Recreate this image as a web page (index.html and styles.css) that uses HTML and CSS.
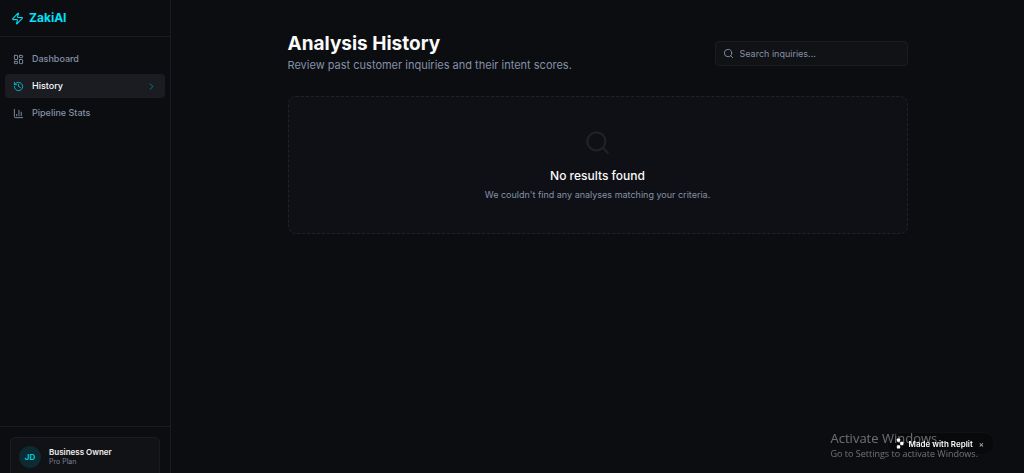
FILE: index.html
```html
<!DOCTYPE html>
<html lang="en">
<head>
    <meta charset="UTF-8">
    <meta name="viewport" content="width=device-width, initial-scale=1.0">
    <title>ZakiAI - Analysis History</title>
    <link rel="stylesheet" href="styles.css">
</head>
<body>
    <div class="app">
        <aside class="sidebar">
            <a class="brand" href="#">
                <svg class="icon brand-icon" viewBox="0 0 24 24"><path d="M4 14a1 1 0 0 1-.78-1.63l9.9-10.2a.5.5 0 0 1 .86.46l-1.92 6.02A1 1 0 0 0 13 10h7a1 1 0 0 1 .78 1.63l-9.9 10.2a.5.5 0 0 1-.86-.46l1.92-6.02A1 1 0 0 0 11 14z"/></svg>
                <span>ZakiAI</span>
            </a>
            <nav class="nav">
                <a class="nav-item" href="#">
                    <svg class="icon" viewBox="0 0 24 24"><rect x="3" y="3" width="7" height="9" rx="1"/><rect x="14" y="3" width="7" height="5" rx="1"/><rect x="14" y="12" width="7" height="9" rx="1"/><rect x="3" y="16" width="7" height="5" rx="1"/></svg>
                    <span>Dashboard</span>
                </a>
                <a class="nav-item nav-item--active" href="#" aria-current="page">
                    <svg class="icon" viewBox="0 0 24 24"><path d="M3 12a9 9 0 1 0 9-9 9.75 9.75 0 0 0-6.74 2.74L3 8"/><path d="M3 3v5h5"/><path d="M12 7v5l4 2"/></svg>
                    <span>History</span>
                    <svg class="icon nav-arrow" viewBox="0 0 24 24"><path d="m9 18 6-6-6-6"/></svg>
                </a>
                <a class="nav-item" href="#">
                    <svg class="icon" viewBox="0 0 24 24"><path d="M3 3v16a2 2 0 0 0 2 2h16"/><path d="M8 17v-3"/><path d="M13 17V5"/><path d="M18 17V9"/></svg>
                    <span>Pipeline Stats</span>
                </a>
            </nav>
            <div class="sidebar-footer">
                <div class="user">
                    <div class="avatar">JD</div>
                    <div>
                        <div class="user-name">Business Owner</div>
                        <div class="user-plan">Pro Plan</div>
                    </div>
                </div>
            </div>
        </aside>

        <main class="main">
            <div class="content">
                <header class="page-header">
                    <div>
                        <h1 class="title">Analysis History</h1>
                        <p class="subtitle">Review past customer inquiries and their intent scores.</p>
                    </div>
                    <label class="search">
                        <svg class="icon" viewBox="0 0 24 24"><circle cx="11" cy="11" r="8"/><path d="m21 21-4.3-4.3"/></svg>
                        <input class="search-input" type="text" placeholder="Search inquiries..." aria-label="Search inquiries">
                    </label>
                </header>
                <section class="empty">
                    <svg class="icon empty-icon" viewBox="0 0 24 24"><circle cx="11" cy="11" r="8"/><path d="m21 21-4.3-4.3"/></svg>
                    <h2 class="empty-title">No results found</h2>
                    <p class="empty-text">We couldn't find any analyses matching your criteria.</p>
                </section>
            </div>
        </main>
    </div>

    <div class="badge">
        <a class="badge-link" href="#">
            <svg class="badge-logo" viewBox="0 0 12 12"><rect x="1" y="0" width="4" height="4" rx="1"/><rect x="5" y="4" width="4" height="4" rx="1"/><rect x="1" y="8" width="4" height="4" rx="1"/></svg>
            <span>Made with Replit</span>
        </a>
        <button class="badge-close" type="button" aria-label="Close">×</button>
    </div>

    <div class="watermark">
        <div class="watermark-title">Activate Windows</div>
        <div class="watermark-text">Go to Settings to activate Windows.</div>
    </div>
</body>
</html>
```
FILE: styles.css
```css
* {
    box-sizing: border-box;
}

body {
    margin: 0;
    height: 100vh;
    overflow: hidden;
    background-color: #0c0d11;
    color: #fafafa;
    font-family: Inter, "Liberation Sans", sans-serif;
    font-size: 9px;
    line-height: 14px;
}

h1, h2, p {
    margin: 0;
}

a {
    color: inherit;
    text-decoration: none;
}

.icon {
    flex: none;
    width: 11px;
    height: 11px;
    fill: none;
    stroke: currentColor;
    stroke-width: 2;
    stroke-linecap: round;
    stroke-linejoin: round;
}

/* the sidebar card runs a little past the fold */
.app {
    display: flex;
    height: calc(100vh + 14px);
}

.sidebar {
    display: flex;
    flex-direction: column;
    flex: none;
    width: 171px;
    border-right: 1px solid #1a1c21;
}

.brand {
    display: flex;
    align-items: center;
    gap: 5px;
    height: 37px;
    padding: 0 11px;
    border-bottom: 1px solid #1a1c21;
    color: #00e1fa;
    font-size: 12px;
    font-weight: 700;
}

.brand-icon {
    width: 13px;
    height: 13px;
}

.nav {
    display: flex;
    flex: 1;
    flex-direction: column;
    gap: 3px;
    padding: 10px 5px;
}

.nav-item {
    display: flex;
    align-items: center;
    gap: 8px;
    height: 24px;
    padding: 0 8px;
    border-radius: 4px;
    color: #8391a5;
    font-weight: 500;
}

.nav-item--active {
    background: #1a1c22;
    color: #fafafa;
}

.nav-item--active .icon {
    color: #00bdd2;
}

.nav-item .nav-arrow {
    margin-left: auto;
    color: #06808e;
}

.sidebar-footer {
    padding: 10px;
    border-top: 1px solid #1a1c21;
}

.user {
    display: flex;
    align-items: center;
    gap: 8px;
    padding: 8px;
    border: 1px solid #1a1c21;
    border-radius: 5px;
    background: #111216;
}

.avatar {
    width: 22px;
    height: 22px;
    border-radius: 50%;
    background: #0d2a31;
    color: #00c8dd;
    font-size: 8px;
    font-weight: 700;
    line-height: 22px;
    text-align: center;
}

.user-name {
    color: #f0f0f0;
    font-size: 8px;
    font-weight: 600;
    line-height: 10px;
}

.user-plan {
    color: #768295;
    font-size: 7px;
    line-height: 10px;
}

.main {
    flex: 1;
    padding: 32px 21px;
}

.content {
    max-width: 620px;
    margin: 0 auto;
}

.page-header {
    display: flex;
    align-items: center;
    justify-content: space-between;
    margin-bottom: 21px;
}

.title {
    font-size: 19px;
    font-weight: 700;
    line-height: 24px;
}

.subtitle {
    color: #8391a5;
    font-size: 11px;
    line-height: 19px;
}

.search {
    display: flex;
    align-items: center;
    gap: 6px;
    width: 193px;
    height: 25px;
    padding: 0 7px;
    border: 1px solid #1a1c21;
    border-radius: 4px;
    background: #111216;
    color: #8391a5;
}

.search-input {
    flex: 1;
    min-width: 0;
    padding: 0;
    border: 0;
    outline: 0;
    background: none;
    color: #fafafa;
    font: inherit;
}

.search-input::placeholder {
    color: #8391a5;
    opacity: 1;
}

.empty {
    padding: 32px 20px 30px;
    border: 1px dashed #202228;
    border-radius: 8px;
    background: #0f1015;
    text-align: center;
}

.empty-icon {
    display: block;
    width: 27px;
    height: 27px;
    margin: 0 auto 11px;
    color: #202228;
}

.empty-title {
    font-size: 12px;
    font-weight: 500;
    line-height: 18px;
}

.empty-text {
    margin-top: 2px;
    color: #8391a5;
    line-height: 16px;
}

.badge {
    position: fixed;
    right: 30px;
    bottom: 19px;
    display: flex;
    align-items: center;
    gap: 4px;
    height: 21px;
    padding: 0 8px;
    border-radius: 11px;
    background: #08090b;
    box-shadow: 0 0 0 1px #101115;
}

.badge-link {
    display: flex;
    align-items: center;
    gap: 3px;
    font-size: 8px;
    font-weight: 600;
}

.badge-logo {
    width: 10px;
    height: 11px;
    fill: #fff;
}

.badge-close {
    padding: 0 2px;
    border: 0;
    background: none;
    color: #d0d0d0;
    font: inherit;
    font-size: 8px;
}

/* desktop notice laid over the whole window */
.watermark {
    position: fixed;
    right: 46px;
    bottom: 12px;
    color: rgba(255, 255, 255, 0.4);
    font-family: "Open Sans", "Noto Sans", sans-serif;
    font-size: 9px;
    line-height: 14px;
    pointer-events: none;
}

.watermark-title {
    font-size: 13px;
    line-height: 18px;
}
```
